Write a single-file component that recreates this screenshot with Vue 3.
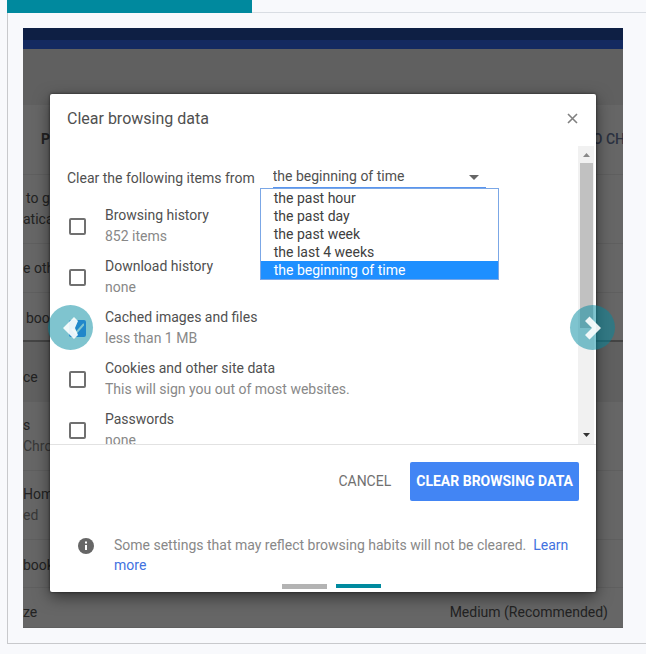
<script setup>
import { ref } from 'vue'

const ranges = ['the past hour', 'the past day', 'the past week', 'the last 4 weeks', 'the beginning of time']
const range = ref('the beginning of time')

const items = ref([
  { id: 'history', label: 'Browsing history', note: '852 items', checked: false },
  { id: 'downloads', label: 'Download history', note: 'none', checked: false },
  { id: 'cache', label: 'Cached images and files', note: 'less than 1 MB', checked: true },
  { id: 'cookies', label: 'Cookies and other site data', note: 'This will sign you out of most websites.', checked: false },
  { id: 'passwords', label: 'Passwords', note: 'none', checked: false },
])

const slide = ref(1)
</script>

<template>
  <div class="page">
    <div class="tabs"><div class="tab-active"></div></div>
    <section class="panel">
      <div class="slide">
        <div class="settings" aria-hidden="true">
          <div class="toolbar"></div>
          <div class="space"></div>
          <div class="row head"><b>P</b><b class="link">O CH</b></div>
          <div class="row two"><span class="inset">to g</span><span>atica</span></div>
          <div class="row sync"><span>e oth</span></div>
          <div class="row import"><span class="inset">boo</span></div>
          <div class="group"><span>ce</span></div>
          <div class="row themes"><span>s</span><span class="sub">Chrom</span></div>
          <div class="row themes"><span>Hom</span><span class="sub">ed</span></div>
          <div class="row bookmarks"><span>book</span></div>
          <div class="row size"><span>ze</span><span class="value">Medium (Recommended)</span></div>
        </div>

        <div class="dialog" role="dialog" aria-labelledby="title">
          <header class="header">
            <h2 id="title">Clear browsing data</h2>
            <button class="close" aria-label="Close">
              <svg width="11" height="11" viewBox="0 0 11 11"><path d="M1 1l9 9M10 1l-9 9" stroke="#808080" stroke-width="1.6" /></svg>
            </button>
          </header>

          <div class="body">
            <div class="content">
              <div class="range">
                <label for="range">Clear the following items from</label>
                <div class="picker">
                  <select id="range" v-model="range">
                    <option v-for="r in ranges" :key="r">{{ r }}</option>
                  </select>
                  <svg class="arrow" width="10" height="5" viewBox="0 0 10 5"><path d="M0 0h10L5 5z" fill="#666" /></svg>
                  <ul class="options" role="listbox">
                    <li v-for="r in ranges" :key="r" role="option" :aria-selected="r === range" :class="{ selected: r === range }" @click="range = r">{{ r }}</li>
                  </ul>
                </div>
              </div>
              <div v-for="item in items" :key="item.id" class="item">
                <input :id="item.id" v-model="item.checked" type="checkbox" />
                <label :for="item.id">{{ item.label }}<small>{{ item.note }}</small></label>
              </div>
            </div>
            <div class="scrollbar">
              <svg width="16" height="17" viewBox="0 0 16 17"><path d="M5 11h7L8.500 7z" fill="#888" /></svg>
              <div class="thumb"></div>
              <svg width="16" height="17" viewBox="0 0 16 17"><path d="M5 6h7L8.500 10z" fill="#333" /></svg>
            </div>
          </div>

          <div class="actions">
            <button class="cancel">CANCEL</button>
            <button class="confirm">CLEAR BROWSING DATA</button>
          </div>
          <footer class="footnote">
            <svg width="16" height="16" viewBox="0 0 16 16">
              <circle cx="8" cy="8" r="8" fill="#666" />
              <path d="M7 3.500h2v2H7zM7 7h2v5H7z" fill="#fff" />
            </svg>
            <p>Some settings that may reflect browsing habits will not be cleared.&nbsp; <a href="#">Learn more</a></p>
          </footer>
        </div>

        <button class="nav prev" aria-label="Previous" @click="slide = 0">
          <svg width="16" height="24" viewBox="0 0 16 24">
            <path d="M11 1L0 12l11 11 4-4-3-7 3-7z" fill="#fff" />
          </svg>
        </button>
        <button class="nav next" aria-label="Next" @click="slide = 1">
          <svg width="16" height="24" viewBox="0 0 16 24"><path d="M4.500 .500L16 12 4.500 23.500 0 19l7-7-7-7z" fill="#fff" /></svg>
        </button>
        <div class="indicators">
          <button v-for="n in 2" :key="n" :class="{ active: slide === n - 1 }" :aria-label="'Slide ' + n" @click="slide = n - 1"></button>
        </div>
      </div>
    </section>
  </div>
</template>

<style>
body {
  background: #f8f9fc;
}
</style>

<style scoped>
* {
  box-sizing: border-box;
}

.page {
  padding: 0 0 10px 7px;
  font: 14px/21px Roboto, sans-serif;
  color: #505050;
}

button {
  border: 0;
  padding: 0;
  background: none;
  font: inherit;
  cursor: pointer;
}

.tabs {
  height: 13px;
  border-bottom: 1px solid #d9dde3;
}

.tab-active {
  width: 245px;
  height: 13px;
  background: #00899e;
}

.panel {
  padding: 15px 23px 15px 15px;
  border: solid #c8c9cc;
  border-width: 0 0 1px 1px;
}

.slide {
  display: grid;
  position: relative;
  overflow: hidden;
}

.settings,
.dialog {
  grid-area: 1 / 1;
}

/* dimmed settings page behind the dialog */
.settings {
  background: #606060;
  color: #222;
}

.toolbar {
  height: 21px;
  background: #142a60;
  border-top: 12px solid #0e1f44;
}

.space {
  height: 56px;
}

.row {
  display: flex;
  flex-direction: column;
  justify-content: center;
  background: #666;
  border-bottom: 1px solid #5f5f5f;
}

.inset {
  padding-left: 3px;
}

.sub {
  color: #383838;
}

.head {
  flex-direction: row;
  justify-content: space-between;
  align-items: center;
  height: 70px;
  padding-left: 18px;
}

.link {
  margin-right: -2px;
  color: #2b3140;
  font-weight: 500;
}

.two {
  height: 69px;
}

.sync {
  height: 49px;
}

.import {
  height: 49px;
  padding-top: 3px;
  border-bottom: 2px solid #444;
}

.group {
  height: 60px;
  padding-top: 25px;
}

.themes {
  height: 69px;
}

.bookmarks {
  height: 48px;
  padding-top: 3px;
}

.size {
  flex-direction: row;
  justify-content: space-between;
  align-items: center;
  height: 40px;
  padding: 10px 15px 0 0;
}

.dialog {
  margin: 66px 27px 36px;
  background: #fff;
  border-radius: 2px;
  box-shadow: 0 5px 16px rgba(0, 0, 0, 0.5), 0 0 3px rgba(0, 0, 0, 0.6);
}

.header {
  display: flex;
  justify-content: space-between;
  align-items: center;
  height: 52px;
  padding: 0 18px 4px 17px;
}

h2 {
  margin: 0;
  font-size: 16px;
  font-weight: 400;
}

.close {
  display: flex;
}

.body {
  display: flex;
  height: 299px;
  padding-right: 2px;
  border-bottom: 1px solid #e2e2e2;
  overflow: hidden;
}

.content {
  flex: 1;
  padding: 18px 0 0 17px;
}

.range {
  display: flex;
  gap: 18px;
  margin-bottom: 14px;
  line-height: 25px;
}

.range label {
  padding-top: 2px;
}

.picker {
  position: relative;
  width: 213px;
}

select {
  display: block;
  width: 100%;
  height: 25px;
  padding: 0;
  border: 0;
  border-bottom: 2px solid #5a95ee;
  appearance: none;
  background: none;
  font: inherit;
  color: inherit;
}

.arrow {
  position: absolute;
  top: 11px;
  right: 7px;
}

.options {
  position: absolute;
  z-index: 1;
  top: 24px;
  left: -13px;
  width: 239px;
  margin: 0;
  padding: 0;
  border: 1px solid #7ba7e6;
  background: #fff;
  color: #404040;
  line-height: 18px;
  list-style: none;
}

.options li {
  padding-left: 13px;
}

.options .selected {
  background: #1e8fff;
  color: #fff;
}

.item {
  display: flex;
  align-items: center;
  gap: 19px;
  height: 42px;
  margin-bottom: 9px;
  padding-left: 2px;
}

input {
  width: 17px;
  height: 17px;
  margin: 0;
  border: 2px solid #707070;
  border-radius: 2px;
  appearance: none;
}

input:checked {
  border-color: #4285f4;
  background: #4285f4 url("data:image/svg+xml,%3Csvg xmlns='http://www.w3.org/2000/svg' viewBox='0 0 13 13'%3E%3Cpath d='M1 7l4 4 8-9' fill='none' stroke='white' stroke-width='2'/%3E%3C/svg%3E");
}

small {
  display: block;
  font-size: 14px;
  color: #888;
}

.scrollbar {
  display: flex;
  flex-direction: column;
  width: 16px;
  background: #f1f1f1;
}

.scrollbar svg {
  flex: none;
}

.thumb {
  height: 165px;
  margin: 0 1px 0 2px;
  background: #c1c1c1;
}

.scrollbar svg:last-child {
  margin-top: auto;
}

.actions {
  display: flex;
  justify-content: flex-end;
  gap: 19px;
  padding: 17px 17px 0;
}

.cancel {
  color: #707070;
}

.confirm {
  height: 39px;
  padding: 0 6px;
  border-radius: 2px;
  background: #4285f4;
  color: #fff;
  font-weight: 700;
}

.footnote {
  display: flex;
  gap: 20px;
  padding: 34px 20px 17px 28px;
  color: #888;
  line-height: 20px;
}

.footnote svg {
  flex: none;
  margin-top: 3px;
}

.footnote p {
  margin: 0;
}

.footnote a {
  color: #4272e0;
  text-decoration: none;
}

.nav {
  display: flex;
  position: absolute;
  top: 277px;
  justify-content: center;
  align-items: center;
  width: 45px;
  height: 45px;
  border-radius: 50%;
  background: rgba(0, 138, 159, 0.5);
}

.nav svg {
  opacity: 0.9;
}

.prev {
  left: 25px;
}

.next {
  right: 8px;
}

.indicators {
  display: flex;
  position: absolute;
  right: 0;
  bottom: 39px;
  left: 0;
  justify-content: center;
  gap: 9px;
  padding-left: 17px;
}

.indicators button {
  width: 45px;
  height: 5px;
  background: #b3b3b3;
}

.indicators .active {
  height: 4px;
  background: #008a9f;
}
</style>
